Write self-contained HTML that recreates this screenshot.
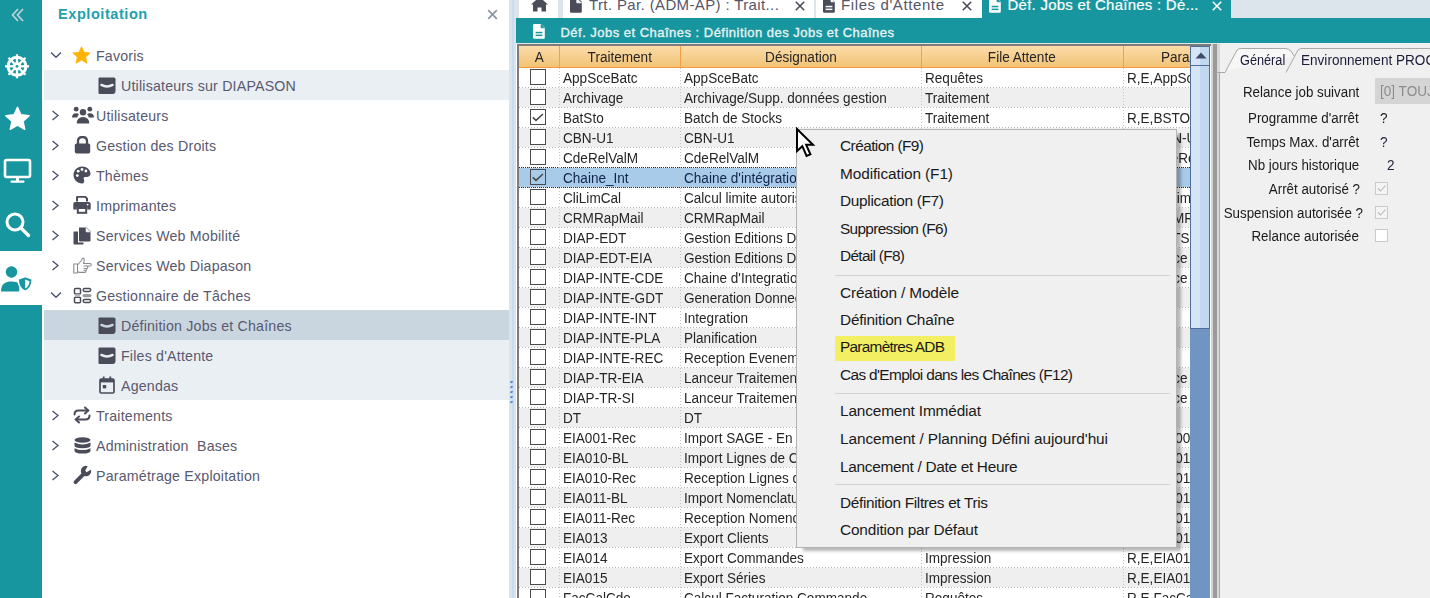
<!DOCTYPE html>
<html><head><meta charset="utf-8"><title>Exploitation</title>
<style>
*{box-sizing:border-box}
html,body{margin:0;padding:0}
body{width:1430px;height:598px;overflow:hidden;position:relative;background:#fff;font-family:"Liberation Sans",sans-serif}
.a{position:absolute}
.sb{background:#18969f;left:0;width:42px}
.tree{font-size:14.2px;letter-spacing:0.2px;color:#595970;white-space:nowrap}
.ti{position:absolute;height:30px;line-height:30px}
.grid{font-size:15.5px;color:#262626;white-space:nowrap}
.t{display:inline-block;transform:scaleX(0.875);transform-origin:0 0}
.tc{display:inline-block;transform:scaleX(0.875);transform-origin:50% 0}
.tr{display:inline-block;transform:scaleX(0.86);transform-origin:100% 0}
.row{position:absolute;left:519px;width:671px;height:19px}
.cell{position:absolute;top:0;height:19px;line-height:19.3px;overflow:hidden;white-space:nowrap}
.cb{position:absolute;left:11px;top:1px;width:16px;height:16px;border:1.6px solid #4a4a4a;background:#fff}
.menu{font-size:15.4px;color:#1a1a1a;white-space:nowrap}
.mi{position:absolute;left:43px;height:27px;line-height:27px}
.rp{font-size:15.5px;color:#1a1a1a;white-space:nowrap}
</style></head><body>

<div class="a sb" style="top:0;height:251px"></div>
<div class="a sb" style="top:305px;height:293px"></div>
<svg class="a" style="left:10px;top:7px" width="16" height="16" viewBox="0 0 16 16"><path d="M8 2 L2.5 8 L8 14 M13 2 L7.5 8 L13 14" fill="none" stroke="#bfd3d6" stroke-width="1.7"/></svg>
<svg class="a" style="left:4px;top:53px" width="26" height="26" viewBox="0 0 26 26">
<g fill="none" stroke="#fff">
<circle cx="13" cy="13.3" r="9" stroke-width="3"/>
<circle cx="13" cy="13.3" r="2.8" stroke-width="2.6"/>
<g stroke-width="2.3">
<line x1="13" y1="1.3" x2="13" y2="25.3"/><line x1="1" y1="13.3" x2="25" y2="13.3"/>
<line x1="4.5" y1="4.8" x2="21.5" y2="21.8"/><line x1="21.5" y1="4.8" x2="4.5" y2="21.8"/>
</g></g>
<circle cx="13" cy="13.3" r="1.4" fill="#18969f"/>
</svg>
<svg class="a" style="left:4px;top:106px" width="27" height="26" viewBox="0 0 24 24"><path d="M12 1.2 L15.2 8.1 L22.8 8.9 L17.1 14 L18.7 21.5 L12 17.7 L5.3 21.5 L6.9 14 L1.2 8.9 L8.8 8.1 Z" fill="#fff" stroke="#fff" stroke-width="1.3" stroke-linejoin="round"/></svg>
<svg class="a" style="left:3px;top:158px" width="29" height="27" viewBox="0 0 29 27"><rect x="2" y="2" width="25" height="17" rx="1.5" fill="none" stroke="#fff" stroke-width="2.6"/><rect x="13" y="19" width="3" height="4" fill="#fff"/><rect x="7.5" y="22.5" width="14" height="2.2" rx="1" fill="#fff"/></svg>
<svg class="a" style="left:4px;top:211px" width="27" height="27" viewBox="0 0 27 27"><circle cx="11" cy="11" r="8" fill="none" stroke="#fff" stroke-width="3"/><line x1="17" y1="17" x2="24.5" y2="24.5" stroke="#fff" stroke-width="3.2" stroke-linecap="round"/></svg>
<svg class="a" style="left:0px;top:262px" width="34" height="32" viewBox="0 0 34 32">
<circle cx="11.5" cy="10" r="5.8" fill="#18969f"/>
<path d="M1 29.5 C1 22 5 19.5 11.5 19.5 C15 19.5 17.5 20.3 19.2 21.5 L19.2 29.5 Z" fill="#18969f"/>
<path d="M25.2 14.6 L32.2 17.2 C32.2 23.5 29.5 27.5 25.2 29.2 C20.9 27.5 18.2 23.5 18.2 17.2 Z" fill="#18969f" stroke="#fff" stroke-width="1.4"/>
<path d="M25.2 17.4 L25.2 26.6 C27.6 25.2 29.4 22.6 29.6 19.2 Z" fill="#fff"/>
</svg>
<div class="a" style="left:58px;top:4px;font-size:14.6px;letter-spacing:0.52px;font-weight:bold;color:#20a0ae;line-height:21px">Exploitation</div>
<svg class="a" style="left:487px;top:9px" width="11" height="11" viewBox="0 0 11 11"><path d="M1.2 1.2 L9.8 9.8 M9.8 1.2 L1.2 9.8" stroke="#8a95a3" stroke-width="1.7"/></svg>
<div class="a" style="left:44px;top:70px;width:465px;height:30px;background:#eaeff3"></div>
<div class="a" style="left:44px;top:310px;width:465px;height:30px;background:#c9d6e0"></div>
<div class="a" style="left:44px;top:340px;width:465px;height:60px;background:#eaeff3"></div>
<svg class="a" style="left:72px;top:46px" width="19" height="19" viewBox="0 0 24 24"><path d="M12 1 L15.3 8 L23 8.8 L17.2 14 L18.9 21.8 L12 17.8 L5.1 21.8 L6.8 14 L1 8.8 L8.7 8 Z" fill="#ffb300" stroke="#ffb300" stroke-width="1" stroke-linejoin="round"/></svg>
<svg class="a" style="left:72px;top:106px" width="22" height="18" viewBox="0 0 22 18"><g fill="#4a4d59">
<circle cx="4.2" cy="3.2" r="2.4"/><circle cx="17.8" cy="3.2" r="2.4"/><circle cx="11" cy="6.2" r="3.2"/>
<path d="M0 11.5 Q0 7.2 4.2 7.2 Q6 7.2 7 8.2 Q5.5 9.5 5.3 11.5 Z"/><path d="M22 11.5 Q22 7.2 17.8 7.2 Q16 7.2 15 8.2 Q16.5 9.5 16.7 11.5 Z"/>
<path d="M4.8 17.5 Q4.8 11 11 11 Q17.2 11 17.2 17.5 Z"/></g></svg>
<svg class="a" style="left:74px;top:136px" width="17" height="18" viewBox="0 0 17 18"><path d="M4 8 V5.2 Q4 1 8.5 1 Q13 1 13 5.2 V8" fill="none" stroke="#4a4d59" stroke-width="2.3"/><rect x="0.8" y="7.5" width="15.4" height="10" rx="1.8" fill="#4a4d59"/></svg>
<svg class="a" style="left:73px;top:166px" width="18" height="18" viewBox="0 0 18 18"><path d="M9 0.5 C13.8 0.5 17.5 3.8 17.5 7.6 C17.5 10 15.8 11 13.8 11 L12 11 C10.8 11 10.2 12 10.8 13 C11.4 14 11.3 15 11 15.9 C10.6 17.1 9.8 17.5 9 17.5 C4.3 17.5 0.5 13.7 0.5 9 C0.5 4.3 4.3 0.5 9 0.5 Z" fill="#4a4d59"/><g fill="#fff"><circle cx="4.3" cy="9.6" r="1.4"/><circle cx="5.2" cy="5.2" r="1.4"/><circle cx="9" cy="3.5" r="1.4"/><circle cx="12.9" cy="5" r="1.4"/></g></svg>
<svg class="a" style="left:73px;top:196px" width="18" height="18" viewBox="0 0 18 18"><path d="M4 5.5 V1.5 Q4 0.8 4.8 0.8 H12.2 L14 2.6 V5.5" fill="none" stroke="#4a4d59" stroke-width="2"/><path d="M2.2 6 H15.8 Q17.7 6 17.7 8 V13.5 H14.2 V11 H3.8 V13.5 H0.3 V8 Q0.3 6 2.2 6 Z" fill="#4a4d59"/><rect x="4.8" y="12" width="8.4" height="4.8" fill="none" stroke="#4a4d59" stroke-width="2"/><circle cx="14.6" cy="8.6" r="0.9" fill="#fff"/></svg>
<svg class="a" style="left:73px;top:227px" width="18" height="18" viewBox="0 0 18 18"><path d="M6 0.5 H13.5 L17.5 4.5 V13.5 Q17.5 14.5 16.5 14.5 H7 Q6 14.5 6 13.5 Z" fill="#4a4d59"/><path d="M13.2 0.8 V4.8 H17.2" fill="#fff" stroke="#fff" stroke-width="0.9"/><path d="M1.2 4.5 H5 V15.5 H10.5 V16.8 Q10.5 17.5 9.8 17.5 H1.2 Q0.5 17.5 0.5 16.8 V5.2 Q0.5 4.5 1.2 4.5 Z" fill="#4a4d59"/></svg>
<svg class="a" style="left:73px;top:257px" width="19" height="17" viewBox="0 0 19 17"><path d="M0.8 7 H4.5 V16 H0.8 Z M4.5 8 L8.5 3.5 Q9.2 1 10.4 1 Q11.8 1.3 11 4.5 L10.5 6.5 H17 Q18.3 6.5 18.3 7.8 Q18.3 9 17 9 H14 Q15 9.3 14.8 10.5 Q14.5 11.5 13.5 11.5 Q14 12.6 13 13.4 Q13.4 14.6 12.2 15.4 H6.5 L4.5 14.5" fill="#fff" stroke="#8a8c94" stroke-width="1.1" stroke-linejoin="round"/><path d="M10.5 9 H14 M10.5 11.5 H13.5 M10.5 13.4 H13" stroke="#8a8c94" stroke-width="1"/></svg>
<svg class="a" style="left:73px;top:287px" width="19" height="17" viewBox="0 0 19 17"><g fill="none" stroke="#4a4d59" stroke-width="1.5"><rect x="1.5" y="1.5" width="6" height="5.5" rx="1"/><rect x="1.5" y="10.2" width="6" height="5.5" rx="1"/><rect x="10.2" y="1.5" width="7.5" height="3" rx="1.4"/><rect x="10.2" y="12.5" width="7.5" height="3" rx="1.4"/></g><rect x="2" y="7.2" width="5" height="2.8" fill="#b4b6bc"/><rect x="9.5" y="7" width="9" height="3.2" rx="1.6" fill="#9a9ca4"/></svg>
<svg class="a" style="left:73px;top:406px" width="18" height="18" viewBox="0 0 18 18"><g fill="none" stroke="#4a4d59" stroke-width="2" stroke-linecap="round"><path d="M1.5 8.5 Q1.5 4.5 5.5 4.5 H15"/><path d="M12 1.5 L15.2 4.5 L12 7.5"/><path d="M16.5 9.5 Q16.5 13.5 12.5 13.5 H3"/><path d="M6 10.5 L2.8 13.5 L6 16.5"/></g></svg>
<svg class="a" style="left:74px;top:437px" width="17" height="17" viewBox="0 0 17 17"><g fill="#4a4d59"><ellipse cx="8.5" cy="3" rx="8" ry="2.8"/><path d="M0.5 5.6 Q8.5 9.6 16.5 5.6 V8.6 Q16.5 11.3 8.5 11.3 Q0.5 11.3 0.5 8.6 Z"/><path d="M0.5 11.2 Q8.5 15 16.5 11.2 V13.8 Q16.5 16.6 8.5 16.6 Q0.5 16.6 0.5 13.8 Z"/></g></svg>
<svg class="a" style="left:73px;top:465px" width="19" height="20" viewBox="0 0 19 20"><line x1="2.6" y1="17.2" x2="10.5" y2="9.2" stroke="#4a4d59" stroke-width="3.8" stroke-linecap="round"/><circle cx="13" cy="6" r="5.2" fill="#4a4d59"/><path d="M12.2 5.6 L15.4 0 L19.5 3.6 L13.6 7.2 Z" fill="#fff"/></svg>
<svg class="a" style="left:99px;top:376px" width="16" height="18" viewBox="0 0 16 18"><rect x="1" y="3.2" width="14" height="13.8" rx="1.2" fill="none" stroke="#4a4d59" stroke-width="1.7"/><rect x="1" y="3.2" width="14" height="3.2" fill="#4a4d59"/><rect x="3.8" y="0.5" width="1.8" height="4" fill="#4a4d59"/><rect x="10.4" y="0.5" width="1.8" height="4" fill="#4a4d59"/><rect x="3.8" y="9" width="3.4" height="3.4" fill="#4a4d59"/></svg>
<svg class="a" style="left:50px;top:51px" width="12" height="8" viewBox="0 0 12 8"><path d="M1 1.5 L6 6.3 L11 1.5" fill="none" stroke="#4a4f6a" stroke-width="1.3"/></svg>
<div class="ti tree" style="left:96px;top:40.5px">Favoris</div>
<svg class="a" style="left:98px;top:77px" width="18" height="18" viewBox="0 0 18 18"><path d="M1.5 0.5 H15.8 Q17.5 0.5 17.5 2.2 V14 Q17.5 17 14.5 17 H1.5 Q0.5 17 0.5 16 V1.5 Q0.5 0.5 1.5 0.5 Z" fill="#4a4d59"/><path d="M3.4 7.9 Q9 11 14.6 7.9" fill="none" stroke="#eaeff3" stroke-width="2.4" stroke-linecap="round"/></svg>
<div class="ti tree" style="left:121px;top:70.5px">Utilisateurs sur DIAPASON</div>
<svg class="a" style="left:51px;top:110px" width="9" height="11" viewBox="0 0 9 11"><path d="M1.5 1 L7 5.5 L1.5 10" fill="none" stroke="#4a4f6a" stroke-width="1.3"/></svg>
<div class="ti tree" style="left:96px;top:100.5px">Utilisateurs</div>
<svg class="a" style="left:51px;top:140px" width="9" height="11" viewBox="0 0 9 11"><path d="M1.5 1 L7 5.5 L1.5 10" fill="none" stroke="#4a4f6a" stroke-width="1.3"/></svg>
<div class="ti tree" style="left:96px;top:130.5px">Gestion des Droits</div>
<svg class="a" style="left:51px;top:170px" width="9" height="11" viewBox="0 0 9 11"><path d="M1.5 1 L7 5.5 L1.5 10" fill="none" stroke="#4a4f6a" stroke-width="1.3"/></svg>
<div class="ti tree" style="left:96px;top:160.5px">Thèmes</div>
<svg class="a" style="left:51px;top:200px" width="9" height="11" viewBox="0 0 9 11"><path d="M1.5 1 L7 5.5 L1.5 10" fill="none" stroke="#4a4f6a" stroke-width="1.3"/></svg>
<div class="ti tree" style="left:96px;top:190.5px">Imprimantes</div>
<svg class="a" style="left:51px;top:230px" width="9" height="11" viewBox="0 0 9 11"><path d="M1.5 1 L7 5.5 L1.5 10" fill="none" stroke="#4a4f6a" stroke-width="1.3"/></svg>
<div class="ti tree" style="left:96px;top:220.5px">Services Web Mobilité</div>
<svg class="a" style="left:51px;top:260px" width="9" height="11" viewBox="0 0 9 11"><path d="M1.5 1 L7 5.5 L1.5 10" fill="none" stroke="#4a4f6a" stroke-width="1.3"/></svg>
<div class="ti tree" style="left:96px;top:250.5px">Services Web Diapason</div>
<svg class="a" style="left:50px;top:291px" width="12" height="8" viewBox="0 0 12 8"><path d="M1 1.5 L6 6.3 L11 1.5" fill="none" stroke="#4a4f6a" stroke-width="1.3"/></svg>
<div class="ti tree" style="left:96px;top:280.5px">Gestionnaire de Tâches</div>
<svg class="a" style="left:98px;top:317px" width="18" height="18" viewBox="0 0 18 18"><path d="M1.5 0.5 H15.8 Q17.5 0.5 17.5 2.2 V14 Q17.5 17 14.5 17 H1.5 Q0.5 17 0.5 16 V1.5 Q0.5 0.5 1.5 0.5 Z" fill="#4a4d59"/><path d="M3.4 7.9 Q9 11 14.6 7.9" fill="none" stroke="#c9d6e0" stroke-width="2.4" stroke-linecap="round"/></svg>
<div class="ti tree" style="left:121px;top:310.5px">Définition Jobs et Chaînes</div>
<svg class="a" style="left:98px;top:347px" width="18" height="18" viewBox="0 0 18 18"><path d="M1.5 0.5 H15.8 Q17.5 0.5 17.5 2.2 V14 Q17.5 17 14.5 17 H1.5 Q0.5 17 0.5 16 V1.5 Q0.5 0.5 1.5 0.5 Z" fill="#4a4d59"/><path d="M3.4 7.9 Q9 11 14.6 7.9" fill="none" stroke="#eaeff3" stroke-width="2.4" stroke-linecap="round"/></svg>
<div class="ti tree" style="left:121px;top:340.5px">Files d'Attente</div>
<div class="ti tree" style="left:121px;top:370.5px">Agendas</div>
<svg class="a" style="left:51px;top:410px" width="9" height="11" viewBox="0 0 9 11"><path d="M1.5 1 L7 5.5 L1.5 10" fill="none" stroke="#4a4f6a" stroke-width="1.3"/></svg>
<div class="ti tree" style="left:96px;top:400.5px">Traitements</div>
<svg class="a" style="left:51px;top:440px" width="9" height="11" viewBox="0 0 9 11"><path d="M1.5 1 L7 5.5 L1.5 10" fill="none" stroke="#4a4f6a" stroke-width="1.3"/></svg>
<div class="ti tree" style="left:96px;top:430.5px">Administration&nbsp; Bases</div>
<svg class="a" style="left:51px;top:470px" width="9" height="11" viewBox="0 0 9 11"><path d="M1.5 1 L7 5.5 L1.5 10" fill="none" stroke="#4a4f6a" stroke-width="1.3"/></svg>
<div class="ti tree" style="left:96px;top:460.5px">Paramétrage Exploitation</div>
<div class="a" style="left:509px;top:0;width:8px;height:598px;background:#dce4eb"></div>
<div class="a" style="left:512px;top:0;width:2px;height:598px;background:#c8dcf3"></div>
<div class="a" style="left:510px;top:381px;width:3px;height:2px;border-radius:1px;background:#4f8ad8;transform:rotate(-35deg)"></div>
<div class="a" style="left:510px;top:386px;width:3px;height:2px;border-radius:1px;background:#4f8ad8;transform:rotate(-35deg)"></div>
<div class="a" style="left:510px;top:391px;width:3px;height:2px;border-radius:1px;background:#4f8ad8;transform:rotate(-35deg)"></div>
<div class="a" style="left:510px;top:396px;width:3px;height:2px;border-radius:1px;background:#4f8ad8;transform:rotate(-35deg)"></div>
<div class="a" style="left:510px;top:401px;width:3px;height:2px;border-radius:1px;background:#4f8ad8;transform:rotate(-35deg)"></div>
<div class="a" style="left:514px;top:0;width:916px;height:18px;background:#dde5ec"></div>
<div class="a" style="left:519px;top:0;width:39px;height:18px;background:#fff"></div>
<svg class="a" style="left:531px;top:0px" width="17" height="12" viewBox="0 0 17 12"><path d="M8.5 -3 L17 4.5 L15 4.5 V11.5 H10.5 V7.5 H6.5 V11.5 H2 V4.5 H0 Z" fill="#4a4d59"/></svg>
<div class="a" style="left:563px;top:0;width:251px;height:18px;background:#fff"></div>
<div class="a" style="left:816px;top:0;width:166px;height:18px;background:#fff"></div>
<div class="a" style="left:982px;top:0;width:249px;height:18px;background:#18969f"></div>
<svg class="a" style="left:570px;top:-2px" width="12" height="15" viewBox="0 0 12 15"><path d="M1.2 0 H8 L11.8 3.8 V13.6 Q11.8 14.8 10.6 14.8 H1.2 Q0 14.8 0 13.6 V1.2 Q0 0 1.2 0 Z" fill="#4a4d59"/><path d="M6.8 0.3 V4.8 H11.6" fill="#fff" stroke="#fff" stroke-width="0.8"/></svg>
<svg class="a" style="left:823px;top:-2px" width="12" height="15" viewBox="0 0 12 15"><path d="M1.2 0 H8 L11.8 3.8 V13.6 Q11.8 14.8 10.6 14.8 H1.2 Q0 14.8 0 13.6 V1.2 Q0 0 1.2 0 Z" fill="#4a4d59"/><path d="M8 0.3 V3.8 H11.6" fill="#fff" stroke="#fff" stroke-width="0.8"/><rect x="2.6" y="7.8" width="6.8" height="1.5" fill="#fff"/><rect x="2.6" y="10.6" width="6.8" height="1.5" fill="#fff"/></svg>
<svg class="a" style="left:989px;top:-2px" width="12" height="15" viewBox="0 0 12 15"><path d="M1.2 0 H8 L11.8 3.8 V13.6 Q11.8 14.8 10.6 14.8 H1.2 Q0 14.8 0 13.6 V1.2 Q0 0 1.2 0 Z" fill="#fff"/><path d="M8 0.3 V3.8 H11.6" fill="#18969f" stroke="#18969f" stroke-width="0.8"/><rect x="2.6" y="7.8" width="6.8" height="1.5" fill="#18969f"/><rect x="2.6" y="10.6" width="6.8" height="1.5" fill="#18969f"/></svg>
<div class="a" style="left:589px;top:-5px;font-size:15px;letter-spacing:0.37px;line-height:20px;color:#55566a;white-space:nowrap">Trt. Par. (ADM-AP) : Trait...</div>
<div class="a" style="left:841px;top:-5px;font-size:15px;letter-spacing:0.6px;line-height:20px;color:#55566a;white-space:nowrap">Files d'Attente</div>
<div class="a" style="left:1007.5px;top:-5px;font-size:15px;letter-spacing:0.25px;line-height:20px;color:#fff;-webkit-text-stroke:0.2px #fff;white-space:nowrap">Déf. Jobs et Chaînes : Dé...</div>
<svg class="a" style="left:795px;top:1px" width="10" height="10" viewBox="0 0 10 10"><path d="M0.8 0.8 L9.2 9.2 M9.2 0.8 L0.8 9.2" stroke="#4a4d59" stroke-width="1.6"/></svg>
<svg class="a" style="left:962px;top:1px" width="10" height="10" viewBox="0 0 10 10"><path d="M0.8 0.8 L9.2 9.2 M9.2 0.8 L0.8 9.2" stroke="#4a4d59" stroke-width="1.6"/></svg>
<svg class="a" style="left:1212px;top:1px" width="10" height="10" viewBox="0 0 10 10"><path d="M0.8 0.8 L9.2 9.2 M9.2 0.8 L0.8 9.2" stroke="#fff" stroke-width="1.6"/></svg>
<div class="a" style="left:516px;top:18px;width:914px;height:25px;background:#18969f"></div>
<svg class="a" style="left:533px;top:24px" width="12" height="15" viewBox="0 0 12 15"><path d="M1.2 0 H8 L11.8 3.8 V13.6 Q11.8 14.8 10.6 14.8 H1.2 Q0 14.8 0 13.6 V1.2 Q0 0 1.2 0 Z" fill="#fff"/><path d="M8 0.3 V3.8 H11.6" fill="#18969f" stroke="#18969f" stroke-width="0.8"/><rect x="2.6" y="7.8" width="6.8" height="1.5" fill="#18969f"/><rect x="2.6" y="10.6" width="6.8" height="1.5" fill="#18969f"/></svg>
<div class="a" style="left:560.5px;top:23.5px;font-size:13px;letter-spacing:0.48px;-webkit-text-stroke:0.35px #e6f3f3;line-height:18px;color:#e6f3f3;white-space:nowrap">Déf. Jobs et Chaînes : Définition des Jobs et Chaînes</div>
<div class="a" style="left:516px;top:43px;width:914px;height:1px;background:#dfe6e8"></div>
<div class="a" style="left:516px;top:44px;width:694px;height:554px;background:#fff"></div>
<div class="a" style="left:517px;top:44px;width:694px;height:2px;background:#7c7c7c"></div>
<div class="a" style="left:517px;top:44px;width:2px;height:554px;background:#7c7c7c"></div>
<div class="a" style="left:519px;top:46px;width:671px;height:21px;background:linear-gradient(#fbdca9,#f2c375)"></div>
<div class="a" style="left:519px;top:67px;width:671px;height:1px;background:#f39a3c"></div>
<div class="a" style="left:559px;top:46px;width:1px;height:22px;background:#f3a048"></div>
<div class="a" style="left:680px;top:46px;width:1px;height:22px;background:#f3a048"></div>
<div class="a" style="left:921px;top:46px;width:1px;height:22px;background:#f3a048"></div>
<div class="a" style="left:1123px;top:46px;width:1px;height:22px;background:#f3a048"></div>
<div class="a grid" style="left:519px;top:46px;width:40px;height:21px;line-height:21.3px;text-align:center"><span class="tc">A</span></div>
<div class="a grid" style="left:559px;top:46px;width:121px;height:21px;line-height:21.3px;text-align:center"><span class="tc">Traitement</span></div>
<div class="a grid" style="left:680px;top:46px;width:241px;height:21px;line-height:21.3px;text-align:center"><span class="tc">Désignation</span></div>
<div class="a grid" style="left:921px;top:46px;width:202px;height:21px;line-height:21.3px;text-align:center"><span class="tc">File Attente</span></div>
<div class="a grid" style="left:1124px;top:46px;width:66px;height:21px;line-height:21.3px;overflow:hidden"><span class="t" style="position:absolute;left:37px">Paramètres</span></div>
<div class="row grid" style="top:68px;background:#fff">
<div class="cb" style=""></div>
<div class="cell" style="left:44px;width:117px"><span class="t">AppSceBatc</span></div>
<div class="cell" style="left:165px;width:237px"><span class="t">AppSceBatc</span></div>
<div class="cell" style="left:406px;width:198px"><span class="t">Requêtes</span></div>
<div class="cell" style="left:608px;width:63px"><span class="t">R,E,AppSceBatc</span></div>
</div>
<div class="a" style="left:519px;top:87px;width:671px;height:1px;background-image:linear-gradient(90deg,#b8b8b8 50%,transparent 50%);background-size:3px 1px"></div>
<div class="row grid" style="top:88px;background:#efefef">
<div class="cb" style=""></div>
<div class="cell" style="left:44px;width:117px"><span class="t">Archivage</span></div>
<div class="cell" style="left:165px;width:237px"><span class="t">Archivage/Supp. données gestion</span></div>
<div class="cell" style="left:406px;width:198px"><span class="t">Traitement</span></div>
<div class="cell" style="left:608px;width:63px"><span class="t"></span></div>
</div>
<div class="a" style="left:519px;top:107px;width:671px;height:1px;background-image:linear-gradient(90deg,#b8b8b8 50%,transparent 50%);background-size:3px 1px"></div>
<div class="row grid" style="top:108px;background:#fff">
<div class="cb" style=""><svg style="position:absolute;left:0px;top:0px" width="14" height="14" viewBox="0 0 14 14"><path d="M1.8 7.3 L5 10.3 L12 4" fill="none" stroke="#4a4a4a" stroke-width="1.6"/></svg></div>
<div class="cell" style="left:44px;width:117px"><span class="t">BatSto</span></div>
<div class="cell" style="left:165px;width:237px"><span class="t">Batch de Stocks</span></div>
<div class="cell" style="left:406px;width:198px"><span class="t">Traitement</span></div>
<div class="cell" style="left:608px;width:63px"><span class="t">R,E,BSTO</span></div>
</div>
<div class="a" style="left:519px;top:127px;width:671px;height:1px;background-image:linear-gradient(90deg,#b8b8b8 50%,transparent 50%);background-size:3px 1px"></div>
<div class="row grid" style="top:128px;background:#efefef">
<div class="cb" style=""></div>
<div class="cell" style="left:44px;width:117px"><span class="t">CBN-U1</span></div>
<div class="cell" style="left:165px;width:237px"><span class="t">CBN-U1</span></div>
<div class="cell" style="left:406px;width:198px"><span class="t">Traitement</span></div>
<div class="cell" style="left:608px;width:63px"><span class="t">R,E,CBN-U1</span></div>
</div>
<div class="a" style="left:519px;top:147px;width:671px;height:1px;background-image:linear-gradient(90deg,#b8b8b8 50%,transparent 50%);background-size:3px 1px"></div>
<div class="row grid" style="top:148px;background:#fff">
<div class="cb" style=""></div>
<div class="cell" style="left:44px;width:117px"><span class="t">CdeRelValM</span></div>
<div class="cell" style="left:165px;width:237px"><span class="t">CdeRelValM</span></div>
<div class="cell" style="left:406px;width:198px"><span class="t">Traitement</span></div>
<div class="cell" style="left:608px;width:63px"><span class="t">R,E,CdeRelValM</span></div>
</div>
<div class="a" style="left:519px;top:167px;width:671px;height:1px;background-image:linear-gradient(90deg,#b8b8b8 50%,transparent 50%);background-size:3px 1px"></div>
<div class="row grid" style="top:168px;background:#a8cbea;color:#12234a">
<div class="cb" style="background:transparent"><svg style="position:absolute;left:0px;top:0px" width="14" height="14" viewBox="0 0 14 14"><path d="M1.8 7.3 L5 10.3 L12 4" fill="none" stroke="#4a4a4a" stroke-width="1.6"/></svg></div>
<div class="cell" style="left:44px;width:117px"><span class="t">Chaine_Int</span></div>
<div class="cell" style="left:165px;width:237px"><span class="t">Chaine d&#x27;intégration</span></div>
<div class="cell" style="left:406px;width:198px"><span class="t">Traitement</span></div>
<div class="cell" style="left:608px;width:63px"><span class="t"></span></div>
</div>
<div class="a" style="left:519px;top:187px;width:671px;height:1px;background-image:linear-gradient(90deg,#b8b8b8 50%,transparent 50%);background-size:3px 1px"></div>
<div class="row grid" style="top:188px;background:#fff">
<div class="cb" style=""></div>
<div class="cell" style="left:44px;width:117px"><span class="t">CliLimCal</span></div>
<div class="cell" style="left:165px;width:237px"><span class="t">Calcul limite autorisée</span></div>
<div class="cell" style="left:406px;width:198px"><span class="t">Traitement</span></div>
<div class="cell" style="left:608px;width:63px"><span class="t">R,E,CliLim(</span></div>
</div>
<div class="a" style="left:519px;top:207px;width:671px;height:1px;background-image:linear-gradient(90deg,#b8b8b8 50%,transparent 50%);background-size:3px 1px"></div>
<div class="row grid" style="top:208px;background:#efefef">
<div class="cb" style=""></div>
<div class="cell" style="left:44px;width:117px"><span class="t">CRMRapMail</span></div>
<div class="cell" style="left:165px;width:237px"><span class="t">CRMRapMail</span></div>
<div class="cell" style="left:406px;width:198px"><span class="t">Traitement</span></div>
<div class="cell" style="left:608px;width:63px"><span class="t">R,E,CRMRapMF</span></div>
</div>
<div class="a" style="left:519px;top:227px;width:671px;height:1px;background-image:linear-gradient(90deg,#b8b8b8 50%,transparent 50%);background-size:3px 1px"></div>
<div class="row grid" style="top:228px;background:#fff">
<div class="cb" style=""></div>
<div class="cell" style="left:44px;width:117px"><span class="t">DIAP-EDT</span></div>
<div class="cell" style="left:165px;width:237px"><span class="t">Gestion Editions DIAPASON</span></div>
<div class="cell" style="left:406px;width:198px"><span class="t">Traitement</span></div>
<div class="cell" style="left:608px;width:63px"><span class="t">R,E,EDTS</span></div>
</div>
<div class="a" style="left:519px;top:247px;width:671px;height:1px;background-image:linear-gradient(90deg,#b8b8b8 50%,transparent 50%);background-size:3px 1px"></div>
<div class="row grid" style="top:248px;background:#efefef">
<div class="cb" style=""></div>
<div class="cell" style="left:44px;width:117px"><span class="t">DIAP-EDT-EIA</span></div>
<div class="cell" style="left:165px;width:237px"><span class="t">Gestion Editions DIAPASON</span></div>
<div class="cell" style="left:406px;width:198px"><span class="t">Traitement</span></div>
<div class="cell" style="left:608px;width:63px"><span class="t">R,E,Trace</span></div>
</div>
<div class="a" style="left:519px;top:267px;width:671px;height:1px;background-image:linear-gradient(90deg,#b8b8b8 50%,transparent 50%);background-size:3px 1px"></div>
<div class="row grid" style="top:268px;background:#fff">
<div class="cb" style=""></div>
<div class="cell" style="left:44px;width:117px"><span class="t">DIAP-INTE-CDE</span></div>
<div class="cell" style="left:165px;width:237px"><span class="t">Chaine d&#x27;Integration</span></div>
<div class="cell" style="left:406px;width:198px"><span class="t">Traitement</span></div>
<div class="cell" style="left:608px;width:63px"><span class="t">R,E,Trace</span></div>
</div>
<div class="a" style="left:519px;top:287px;width:671px;height:1px;background-image:linear-gradient(90deg,#b8b8b8 50%,transparent 50%);background-size:3px 1px"></div>
<div class="row grid" style="top:288px;background:#efefef">
<div class="cb" style=""></div>
<div class="cell" style="left:44px;width:117px"><span class="t">DIAP-INTE-GDT</span></div>
<div class="cell" style="left:165px;width:237px"><span class="t">Generation Donnees</span></div>
<div class="cell" style="left:406px;width:198px"><span class="t">Traitement</span></div>
<div class="cell" style="left:608px;width:63px"><span class="t"></span></div>
</div>
<div class="a" style="left:519px;top:307px;width:671px;height:1px;background-image:linear-gradient(90deg,#b8b8b8 50%,transparent 50%);background-size:3px 1px"></div>
<div class="row grid" style="top:308px;background:#fff">
<div class="cb" style=""></div>
<div class="cell" style="left:44px;width:117px"><span class="t">DIAP-INTE-INT</span></div>
<div class="cell" style="left:165px;width:237px"><span class="t">Integration</span></div>
<div class="cell" style="left:406px;width:198px"><span class="t">Traitement</span></div>
<div class="cell" style="left:608px;width:63px"><span class="t"></span></div>
</div>
<div class="a" style="left:519px;top:327px;width:671px;height:1px;background-image:linear-gradient(90deg,#b8b8b8 50%,transparent 50%);background-size:3px 1px"></div>
<div class="row grid" style="top:328px;background:#efefef">
<div class="cb" style=""></div>
<div class="cell" style="left:44px;width:117px"><span class="t">DIAP-INTE-PLA</span></div>
<div class="cell" style="left:165px;width:237px"><span class="t">Planification</span></div>
<div class="cell" style="left:406px;width:198px"><span class="t">Traitement</span></div>
<div class="cell" style="left:608px;width:63px"><span class="t"></span></div>
</div>
<div class="a" style="left:519px;top:347px;width:671px;height:1px;background-image:linear-gradient(90deg,#b8b8b8 50%,transparent 50%);background-size:3px 1px"></div>
<div class="row grid" style="top:348px;background:#fff">
<div class="cb" style=""></div>
<div class="cell" style="left:44px;width:117px"><span class="t">DIAP-INTE-REC</span></div>
<div class="cell" style="left:165px;width:237px"><span class="t">Reception Evenements</span></div>
<div class="cell" style="left:406px;width:198px"><span class="t">Traitement</span></div>
<div class="cell" style="left:608px;width:63px"><span class="t"></span></div>
</div>
<div class="a" style="left:519px;top:367px;width:671px;height:1px;background-image:linear-gradient(90deg,#b8b8b8 50%,transparent 50%);background-size:3px 1px"></div>
<div class="row grid" style="top:368px;background:#efefef">
<div class="cb" style=""></div>
<div class="cell" style="left:44px;width:117px"><span class="t">DIAP-TR-EIA</span></div>
<div class="cell" style="left:165px;width:237px"><span class="t">Lanceur Traitements</span></div>
<div class="cell" style="left:406px;width:198px"><span class="t">Traitement</span></div>
<div class="cell" style="left:608px;width:63px"><span class="t">R,E,Trace</span></div>
</div>
<div class="a" style="left:519px;top:387px;width:671px;height:1px;background-image:linear-gradient(90deg,#b8b8b8 50%,transparent 50%);background-size:3px 1px"></div>
<div class="row grid" style="top:388px;background:#fff">
<div class="cb" style=""></div>
<div class="cell" style="left:44px;width:117px"><span class="t">DIAP-TR-SI</span></div>
<div class="cell" style="left:165px;width:237px"><span class="t">Lanceur Traitements</span></div>
<div class="cell" style="left:406px;width:198px"><span class="t">Traitement</span></div>
<div class="cell" style="left:608px;width:63px"><span class="t">R,E,Trace</span></div>
</div>
<div class="a" style="left:519px;top:407px;width:671px;height:1px;background-image:linear-gradient(90deg,#b8b8b8 50%,transparent 50%);background-size:3px 1px"></div>
<div class="row grid" style="top:408px;background:#efefef">
<div class="cb" style=""></div>
<div class="cell" style="left:44px;width:117px"><span class="t">DT</span></div>
<div class="cell" style="left:165px;width:237px"><span class="t">DT</span></div>
<div class="cell" style="left:406px;width:198px"><span class="t">Traitement</span></div>
<div class="cell" style="left:608px;width:63px"><span class="t"></span></div>
</div>
<div class="a" style="left:519px;top:427px;width:671px;height:1px;background-image:linear-gradient(90deg,#b8b8b8 50%,transparent 50%);background-size:3px 1px"></div>
<div class="row grid" style="top:428px;background:#fff">
<div class="cb" style=""></div>
<div class="cell" style="left:44px;width:117px"><span class="t">EIA001-Rec</span></div>
<div class="cell" style="left:165px;width:237px"><span class="t">Import SAGE - En Cours</span></div>
<div class="cell" style="left:406px;width:198px"><span class="t">Impression</span></div>
<div class="cell" style="left:608px;width:63px"><span class="t">R,E,EIA00</span></div>
</div>
<div class="a" style="left:519px;top:447px;width:671px;height:1px;background-image:linear-gradient(90deg,#b8b8b8 50%,transparent 50%);background-size:3px 1px"></div>
<div class="row grid" style="top:448px;background:#efefef">
<div class="cb" style=""></div>
<div class="cell" style="left:44px;width:117px"><span class="t">EIA010-BL</span></div>
<div class="cell" style="left:165px;width:237px"><span class="t">Import Lignes de Commandes</span></div>
<div class="cell" style="left:406px;width:198px"><span class="t">Impression</span></div>
<div class="cell" style="left:608px;width:63px"><span class="t">R,E,EIA01</span></div>
</div>
<div class="a" style="left:519px;top:467px;width:671px;height:1px;background-image:linear-gradient(90deg,#b8b8b8 50%,transparent 50%);background-size:3px 1px"></div>
<div class="row grid" style="top:468px;background:#fff">
<div class="cb" style=""></div>
<div class="cell" style="left:44px;width:117px"><span class="t">EIA010-Rec</span></div>
<div class="cell" style="left:165px;width:237px"><span class="t">Reception Lignes de Commandes</span></div>
<div class="cell" style="left:406px;width:198px"><span class="t">Impression</span></div>
<div class="cell" style="left:608px;width:63px"><span class="t">R,E,EIA01</span></div>
</div>
<div class="a" style="left:519px;top:487px;width:671px;height:1px;background-image:linear-gradient(90deg,#b8b8b8 50%,transparent 50%);background-size:3px 1px"></div>
<div class="row grid" style="top:488px;background:#efefef">
<div class="cb" style=""></div>
<div class="cell" style="left:44px;width:117px"><span class="t">EIA011-BL</span></div>
<div class="cell" style="left:165px;width:237px"><span class="t">Import Nomenclatures</span></div>
<div class="cell" style="left:406px;width:198px"><span class="t">Impression</span></div>
<div class="cell" style="left:608px;width:63px"><span class="t">R,E,EIA01</span></div>
</div>
<div class="a" style="left:519px;top:507px;width:671px;height:1px;background-image:linear-gradient(90deg,#b8b8b8 50%,transparent 50%);background-size:3px 1px"></div>
<div class="row grid" style="top:508px;background:#fff">
<div class="cb" style=""></div>
<div class="cell" style="left:44px;width:117px"><span class="t">EIA011-Rec</span></div>
<div class="cell" style="left:165px;width:237px"><span class="t">Reception Nomenclatures</span></div>
<div class="cell" style="left:406px;width:198px"><span class="t">Impression</span></div>
<div class="cell" style="left:608px;width:63px"><span class="t">R,E,EIA01</span></div>
</div>
<div class="a" style="left:519px;top:527px;width:671px;height:1px;background-image:linear-gradient(90deg,#b8b8b8 50%,transparent 50%);background-size:3px 1px"></div>
<div class="row grid" style="top:528px;background:#efefef">
<div class="cb" style=""></div>
<div class="cell" style="left:44px;width:117px"><span class="t">EIA013</span></div>
<div class="cell" style="left:165px;width:237px"><span class="t">Export Clients</span></div>
<div class="cell" style="left:406px;width:198px"><span class="t">Impression</span></div>
<div class="cell" style="left:608px;width:63px"><span class="t">R,E,EIA01</span></div>
</div>
<div class="a" style="left:519px;top:547px;width:671px;height:1px;background-image:linear-gradient(90deg,#b8b8b8 50%,transparent 50%);background-size:3px 1px"></div>
<div class="row grid" style="top:548px;background:#fff">
<div class="cb" style=""></div>
<div class="cell" style="left:44px;width:117px"><span class="t">EIA014</span></div>
<div class="cell" style="left:165px;width:237px"><span class="t">Export Commandes</span></div>
<div class="cell" style="left:406px;width:198px"><span class="t">Impression</span></div>
<div class="cell" style="left:608px;width:63px"><span class="t">R,E,EIA01</span></div>
</div>
<div class="a" style="left:519px;top:567px;width:671px;height:1px;background-image:linear-gradient(90deg,#b8b8b8 50%,transparent 50%);background-size:3px 1px"></div>
<div class="row grid" style="top:568px;background:#efefef">
<div class="cb" style=""></div>
<div class="cell" style="left:44px;width:117px"><span class="t">EIA015</span></div>
<div class="cell" style="left:165px;width:237px"><span class="t">Export Séries</span></div>
<div class="cell" style="left:406px;width:198px"><span class="t">Impression</span></div>
<div class="cell" style="left:608px;width:63px"><span class="t">R,E,EIA01</span></div>
</div>
<div class="a" style="left:519px;top:587px;width:671px;height:1px;background-image:linear-gradient(90deg,#b8b8b8 50%,transparent 50%);background-size:3px 1px"></div>
<div class="row grid" style="top:588px;background:#fff">
<div class="cb" style=""></div>
<div class="cell" style="left:44px;width:117px"><span class="t">FacCalCde</span></div>
<div class="cell" style="left:165px;width:237px"><span class="t">Calcul Facturation Commande</span></div>
<div class="cell" style="left:406px;width:198px"><span class="t">Requêtes</span></div>
<div class="cell" style="left:608px;width:63px"><span class="t">R,E,FacCalCde</span></div>
</div>
<div class="a" style="left:519px;top:607px;width:671px;height:1px;background-image:linear-gradient(90deg,#b8b8b8 50%,transparent 50%);background-size:3px 1px"></div>
<div class="a" style="left:519px;top:167px;width:671px;height:1px;background-image:linear-gradient(90deg,#3a3020 50%,transparent 50%);background-size:2px 1px"></div>
<div class="a" style="left:519px;top:187px;width:671px;height:1px;background-image:linear-gradient(90deg,#3a3020 50%,transparent 50%);background-size:2px 1px"></div>
<div class="a" style="left:559px;top:68px;width:1px;height:530px;background-image:linear-gradient(#c4c4c4 50%,transparent 50%);background-size:1px 3px"></div>
<div class="a" style="left:680px;top:68px;width:1px;height:530px;background-image:linear-gradient(#c4c4c4 50%,transparent 50%);background-size:1px 3px"></div>
<div class="a" style="left:921px;top:68px;width:1px;height:530px;background-image:linear-gradient(#c4c4c4 50%,transparent 50%);background-size:1px 3px"></div>
<div class="a" style="left:1123px;top:68px;width:1px;height:530px;background-image:linear-gradient(#c4c4c4 50%,transparent 50%);background-size:1px 3px"></div>
<div class="a" style="left:1190px;top:46px;width:20px;height:552px;background:#7095c0"></div>
<div class="a" style="left:1190px;top:46px;width:20px;height:20px;background:linear-gradient(90deg,#d6e5f6 50%,#c2d7f0 50%);border:1px solid #526c9a"></div>
<svg class="a" style="left:1195px;top:52px" width="12" height="7" viewBox="0 0 12 7"><path d="M6 0.5 L11.5 6.5 H0.5 Z" fill="#3f4a6a"/></svg>
<div class="a" style="left:1190px;top:65px;width:20px;height:264px;background:linear-gradient(90deg,#d6e5f6 50%,#c2d7f0 50%);border:1px solid #526c9a"></div>
<div class="a" style="left:1211px;top:44px;width:9px;height:554px;background:linear-gradient(90deg,#d4d4d4 0,#d4d4d4 2px,#9a9a9a 2px,#9a9a9a 6px,#d8d8d8 6px)"></div>
<div class="a" style="left:1220px;top:43px;width:210px;height:555px;background:#f0f0f0"></div>
<svg class="a" style="left:1217px;top:43px" width="213" height="555" viewBox="0 0 213 555">
<path d="M0.5 29.5 H8 L20 7 Q21.5 5.5 24 5.5 H68 Q72 5.5 74 8 L77 13" fill="#f7f7f7" stroke="#a8a8a8" stroke-width="1"/>
<path d="M69 29.5 L81 7 Q82.5 5.5 85 5.5 H214" fill="none" stroke="#a8a8a8" stroke-width="1"/>
<path d="M2.5 29.5 V555" stroke="#a8a8a8" stroke-width="1"/>
</svg>
<div class="a rp" style="left:1240px;top:51.4px;line-height:18px;color:#1b1b3a"><span class="t" style="transform:scaleX(0.82)">Général</span></div>
<div class="a rp" style="left:1301px;top:51.4px;line-height:18px;color:#1b1b3a"><span class="t">Environnement PROGRAMME</span></div>
<div class="a" style="left:1375px;top:78px;width:60px;height:26px;background:#d5d5d5"></div>
<div class="a rp" style="left:1380px;top:82.4px;line-height:18px;color:#8c8c8c"><span class="t">[0] TOUJOURS</span></div>
<div class="a rp" style="left:1059px;width:300px;text-align:right;top:82.6px;line-height:18px"><span class="tr">Relance job suivant</span></div>
<div class="a rp" style="left:1059px;width:300px;text-align:right;top:108.6px;line-height:18px"><span class="tr">Programme d&#x27;arrêt</span></div>
<div class="a rp" style="left:1059px;width:300px;text-align:right;top:132.6px;line-height:18px"><span class="tr">Temps Max. d&#x27;arrêt</span></div>
<div class="a rp" style="left:1059px;width:300px;text-align:right;top:155.9px;line-height:18px"><span class="tr">Nb jours historique</span></div>
<div class="a rp" style="left:1060px;width:300px;text-align:right;top:179.6px;line-height:18px"><span class="tr">Arrêt autorisé ?</span></div>
<div class="a rp" style="left:1063.5px;width:300px;text-align:right;top:203.6px;line-height:18px"><span class="tr">Suspension autorisée ?</span></div>
<div class="a rp" style="left:1059px;width:300px;text-align:right;top:227.3px;line-height:18px"><span class="tr">Relance autorisée</span></div>
<div class="a rp" style="left:1380px;top:108.6px;line-height:18px"><span class="t">?</span></div>
<div class="a rp" style="left:1380px;top:132.6px;line-height:18px;color:#222240"><span class="t">?</span></div>
<div class="a rp" style="left:1387px;top:155.9px;line-height:18px;color:#222240"><span class="t">2</span></div>
<div class="a" style="left:1375px;top:182px;width:13px;height:13px;border:1px solid #cacaca;background:#f4f4f4"><svg style="position:absolute;left:0;top:0" width="11" height="11" viewBox="0 0 11 11"><path d="M2 5.5 L4.5 8 L9.5 2.5" fill="none" stroke="#b8b8b8" stroke-width="1.1"/></svg></div>
<div class="a" style="left:1375px;top:206px;width:13px;height:13px;border:1px solid #cacaca;background:#f4f4f4"><svg style="position:absolute;left:0;top:0" width="11" height="11" viewBox="0 0 11 11"><path d="M2 5.5 L4.5 8 L9.5 2.5" fill="none" stroke="#b8b8b8" stroke-width="1.1"/></svg></div>
<div class="a" style="left:1375px;top:229px;width:13px;height:13px;border:1px solid #cacaca;background:#fff"></div>
<div class="a" style="left:803px;top:134px;width:378px;height:417px;background:rgba(0,0,0,0.28);filter:blur(1.5px)"></div>
<div class="a menu" style="left:796px;top:129px;width:381px;height:419px;background:#f0f0f0;border:1px solid #b4b4b4">
<div class="a" style="left:38px;top:206px;width:120px;height:25px;background:#f2ef62"></div>
<div class="a" style="left:43px;top:4.1px;line-height:24px;letter-spacing:-0.556px">Création (F9)</div>
<div class="a" style="left:43px;top:31.6px;line-height:24px;letter-spacing:-0.102px">Modification (F1)</div>
<div class="a" style="left:43px;top:59.1px;line-height:24px;letter-spacing:-0.309px">Duplication (F7)</div>
<div class="a" style="left:43px;top:86.6px;line-height:24px;letter-spacing:-0.670px">Suppression (F6)</div>
<div class="a" style="left:43px;top:114.1px;line-height:24px;letter-spacing:-0.684px">Détail (F8)</div>
<div class="a" style="left:43px;top:150.5px;line-height:24px;letter-spacing:-0.155px">Création / Modèle</div>
<div class="a" style="left:43px;top:177.8px;line-height:24px;letter-spacing:-0.224px">Définition Chaîne</div>
<div class="a" style="left:43px;top:205.2px;line-height:24px;letter-spacing:-0.740px">Paramètres ADB</div>
<div class="a" style="left:43px;top:232.7px;line-height:24px;letter-spacing:-0.631px">Cas d&#x27;Emploi dans les Chaînes (F12)</div>
<div class="a" style="left:43px;top:269.0px;line-height:24px;letter-spacing:-0.160px">Lancement Immédiat</div>
<div class="a" style="left:43px;top:297.0px;line-height:24px;letter-spacing:-0.095px">Lancement / Planning Défini aujourd&#x27;hui</div>
<div class="a" style="left:43px;top:324.5px;line-height:24px;letter-spacing:-0.300px">Lancement / Date et Heure</div>
<div class="a" style="left:43px;top:360.5px;line-height:24px;letter-spacing:-0.341px">Définition Filtres et Tris</div>
<div class="a" style="left:43px;top:388.0px;line-height:24px;letter-spacing:-0.167px">Condition par Défaut</div>
<div class="a" style="left:38px;top:145px;width:335px;height:1px;background:#d2d2d2"></div>
<div class="a" style="left:38px;top:263px;width:335px;height:1px;background:#d2d2d2"></div>
<div class="a" style="left:38px;top:354px;width:335px;height:1px;background:#d2d2d2"></div>
</div>
<svg class="a" style="left:795px;top:127px" width="22" height="33" viewBox="0 0 22 33">
<path d="M2 2 L2 24 L7.3 19.2 L11.6 29 L15.4 27.3 L11.2 17.8 L18 17.8 Z" fill="#fff" stroke="#000" stroke-width="2" stroke-linejoin="miter"/></svg>
</body></html>
